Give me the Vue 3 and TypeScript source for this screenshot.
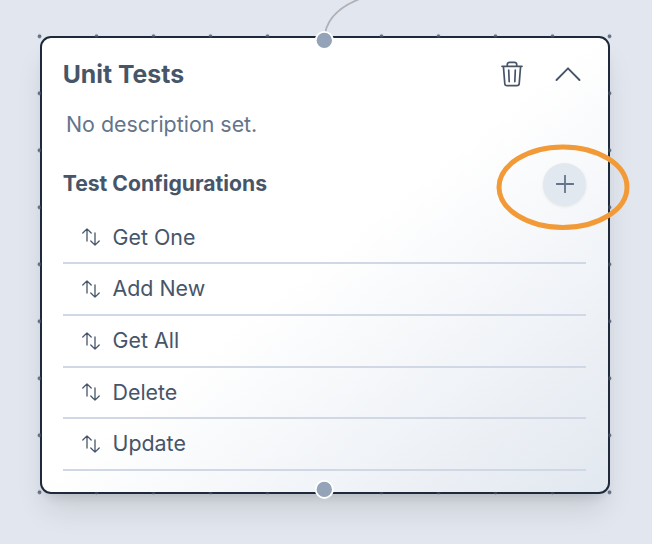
<script setup lang="ts">
const configurations: string[] = ['Get One', 'Add New', 'Get All', 'Delete', 'Update']
</script>

<template>
  <main class="canvas">
    <svg class="backdrop" viewBox="0 0 652 544" aria-hidden="true">
      <path class="edge" d="M324.5 40 C324.5 20 338 7 362 -2" />
    </svg>

    <section class="card">
      <header class="header">
        <h1 class="title">Unit Tests</h1>
        <div class="actions">
          <button class="icon-button" aria-label="Delete">
            <svg class="trash" viewBox="0 0 22 26">
              <path d="M1 5.3H21 M2.4 5.4L3.8 22.7Q4 24.7 6 24.7H16Q18 24.7 18.2 22.7L19.6 5.4 M6.3 5.1V3.6Q6.3 1.3 8.6 1.3H13.4Q15.7 1.3 15.7 3.6V5.1 M7.7 9L8.2 20.7 M14.3 9L13.8 20.7" />
            </svg>
          </button>
          <button class="icon-button" aria-label="Collapse">
            <svg class="chevron" viewBox="0 0 26 16">
              <path d="M1.5 14L13 2.3L24.5 14" />
            </svg>
          </button>
        </div>
      </header>

      <p class="description">No description set.</p>

      <div class="subheader">
        <h2 class="subtitle">Test Configurations</h2>
        <button class="add" aria-label="Add">
          <svg viewBox="0 0 18 18"><path d="M9 .5V17.5M.5 9H17.5" /></svg>
        </button>
      </div>

      <ul class="list">
        <li v-for="name in configurations" :key="name" class="row">
          <svg class="sort" viewBox="0 0 18 18">
            <path d="M5 13V1M.8 5L5 .9L9.2 5M13 5V17M8.8 13L13 17.1L17.2 13" />
          </svg>
          <span class="name">{{ name }}</span>
        </li>
      </ul>
    </section>

    <svg class="overlay" viewBox="0 0 652 544" aria-hidden="true">
      <defs>
        <pattern id="dots" x="11" y="7.8" width="57" height="57" patternUnits="userSpaceOnUse">
          <circle cx="28.5" cy="28.5" r="1.9" />
        </pattern>
        <clipPath id="outside">
          <path clip-rule="evenodd" d="M37 33H612V496H37Z M49 37.5H600Q608.5 37.5 608.5 46V484Q608.5 492.5 600 492.5H49Q41 492.5 41 484V46Q41 37.5 49 37.5Z" />
        </clipPath>
      </defs>
      <rect class="dots" x="37" y="33" width="575" height="463" fill="url(#dots)" clip-path="url(#outside)" />
      <circle class="handle" cx="324.3" cy="40.4" r="8.6" />
      <circle class="handle" cx="324.3" cy="489.4" r="8.6" />
      <ellipse class="highlight" cx="563" cy="187.2" rx="64" ry="40.3" />
    </svg>
  </main>
</template>

<style>
body {
  margin: 0;
}
</style>

<style scoped>
.canvas {
  position: relative;
  box-sizing: border-box;
  width: 652px;
  height: 544px;
  padding: 36px 0 0 39.5px;
  overflow: hidden;
  background: #e2e7ef;
  color: #475569;
  font-family: Inter, "Liberation Sans", sans-serif;
}
.backdrop,
.overlay {
  position: absolute;
  inset: 0;
  width: 652px;
  height: 544px;
  pointer-events: none;
}
.edge {
  fill: none;
  stroke: #b1b1b7;
  stroke-width: 1.8;
}
.dots {
  opacity: 0.8;
}
#dots circle {
  fill: #475569;
}
.handle {
  fill: #94a3b8;
  stroke: #fff;
  stroke-width: 1.8;
}
.highlight {
  fill: none;
  stroke: #f19a37;
  stroke-width: 5;
}
.card {
  position: relative;
  box-sizing: border-box;
  width: 570px;
  height: 458px;
  padding: 13px 21.5px 0;
  border: 2px solid #1e293b;
  border-radius: 11px;
  background: linear-gradient(to bottom right, #fff 0%, #fff 49%, #e2e8f0 100%);
  box-shadow: 0 20px 30px -6px rgb(0 0 0 / 12%), 0 8px 12px -6px rgb(0 0 0 / 12%);
}
.header,
.subheader,
.actions,
.row {
  display: flex;
  align-items: center;
}
.header,
.subheader {
  justify-content: space-between;
}
.header {
  height: 45px;
}
h1,
h2,
p,
ul {
  margin: 0;
  padding: 0;
}
.title {
  margin-left: -0.3px;
  font-size: 24.8px;
  font-weight: 700;
  line-height: 34px;
}
.actions {
  gap: 32.5px;
  padding-right: 4.7px;
}
button {
  display: flex;
  align-items: center;
  justify-content: center;
  padding: 0;
  border: 0;
  background: none;
  color: inherit;
}
path {
  fill: none;
  stroke: currentColor;
  stroke-linecap: round;
  stroke-linejoin: round;
}
.edge {
  stroke: #b1b1b7;
}
.trash {
  width: 22px;
  height: 26px;
  stroke-width: 1.7;
}
.chevron {
  width: 26px;
  height: 16px;
  stroke-width: 1.9;
}
.description {
  padding: 12px 3px 0;
  color: #64748b;
  font-size: 21.4px;
  line-height: 32px;
}
.subheader {
  height: 43px;
  margin-top: 22.5px;
}
.subtitle {
  margin: -1px 0 0 -0.3px;
  font-size: 21.15px;
  font-weight: 650;
  line-height: 30px;
}
.add {
  width: 43px;
  height: 43px;
  border-radius: 50%;
  background: #e2e8f0;
  color: #64748b;
  box-shadow: 0 1px 3px rgb(0 0 0 / 8%);
}
.add svg {
  width: 18px;
  height: 18px;
  stroke-width: 1.8;
}
.list {
  padding-top: 7px;
  list-style: none;
}
.row {
  box-sizing: border-box;
  height: 51.7px;
  gap: 12.5px;
  padding-left: 19px;
  border-bottom: 2px solid #cfd8e4;
  font-size: 21.4px;
  line-height: 30px;
}
.name {
  margin-top: -1.5px;
}
.sort {
  width: 18px;
  height: 18px;
  stroke-width: 1.3;
}
</style>
